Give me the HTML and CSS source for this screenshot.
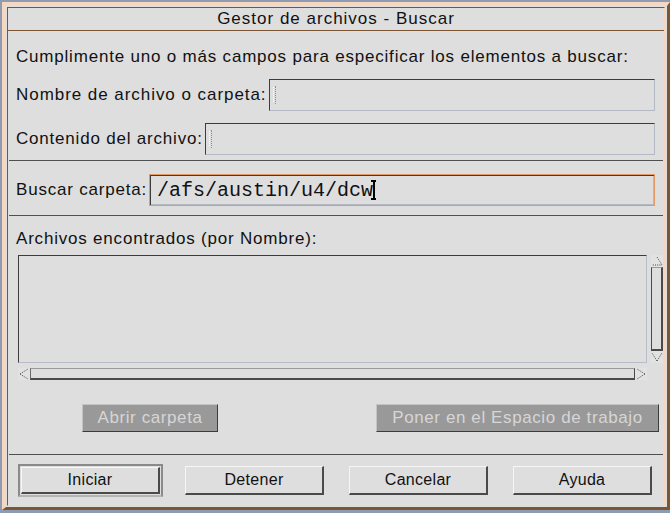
FILE: index.html
```html
<!DOCTYPE html>
<html lang="es">
<head>
<meta charset="utf-8">
<title>Gestor de archivos - Buscar</title>
<link rel="stylesheet" href="styles.css">
</head>
<body>
<div class="window">
  <div class="frame">
    <div class="titlebar">Gestor de archivos - Buscar</div>
    <div class="content">
      <div class="intro">Cumplimente uno o más campos para especificar los elementos a buscar:</div>
      <div class="row row-name">
        <span class="label label-name">Nombre de archivo o carpeta:</span>
        <div class="field"><span class="caret-off"></span></div>
      </div>
      <div class="row row-content">
        <span class="label">Contenido del archivo:</span>
        <div class="field"><span class="caret-off"></span></div>
      </div>
      <div class="sep sep-1"></div>
      <div class="row row-folder">
        <span class="label">Buscar carpeta:</span>
        <div class="field field-focus"><span class="mono">/afs/austin/u4/dcw</span><span class="caret-on"></span></div>
      </div>
      <div class="sep sep-2"></div>
      <div class="found-label">Archivos encontrados (por Nombre):</div>
      <div class="list-area">
        <div class="list-col">
          <div class="listbox"></div>
          <div class="hscroll">
            <div class="arrow">
              <svg width="12" height="12" viewBox="0 0 12 12"><path d="M2 6 L10 11 M2 6 L10 1" stroke="#444" stroke-width="1" stroke-dasharray="1 1.2" fill="none"/></svg>
            </div>
            <div class="hthumb"></div>
            <div class="arrow">
              <svg width="12" height="12" viewBox="0 0 12 12"><path d="M10 6 L2 11 M10 6 L2 1" stroke="#444" stroke-width="1" stroke-dasharray="1 1.2" fill="none"/></svg>
            </div>
          </div>
        </div>
        <div class="vscroll">
          <div class="arrow">
            <svg width="12" height="12" viewBox="0 0 12 12"><path d="M6 2 L11 10 L1 10" stroke="#444" stroke-width="1" stroke-dasharray="1 1.2" fill="none"/></svg>
          </div>
          <div class="vthumb"></div>
          <div class="arrow">
            <svg width="12" height="12" viewBox="0 0 12 12"><path d="M6 10 L11 2 M6 10 L1 2" stroke="#444" stroke-width="1" stroke-dasharray="1 1.2" fill="none"/></svg>
          </div>
        </div>
      </div>
      <div class="actions">
        <div class="btn btn-disabled btn-open">Abrir carpeta</div>
        <div class="btn btn-disabled btn-put">Poner en el Espacio de trabajo</div>
      </div>
      <div class="sep sep-3"></div>
      <div class="footer">
        <div class="default-ring"><div class="btn btn-main">Iniciar</div></div>
        <div class="btn btn-main btn-gap-a">Detener</div>
        <div class="btn btn-main btn-gap-b">Cancelar</div>
        <div class="btn btn-main btn-gap-b">Ayuda</div>
      </div>
    </div>
  </div>
</div>
</body>
</html>
```

FILE: styles.css
```css
* { box-sizing: border-box; }
html, body {
  margin: 0;
  padding: 0;
  width: 670px;
  height: 513px;
  overflow: hidden;
  background: #8d9cb2;
  font-family: "Liberation Sans", Arial, sans-serif;
  color: #000;
}
.window {
  margin: 2px 0 0 2px;
  width: 668px;
  height: 508px;
  border-style: solid;
  border-width: 4px 3px 3px 4px;
  border-color: #f6d6be #7a5634 #7a5634 #f6d6be;
  background: #dedede;
  padding: 1px 2px 1px 1px;
}
.frame {
  height: 100%;
  border: 1px solid;
  border-color: #7a5634 #f6d6be #f6d6be #7a5634;
  display: flex;
  flex-direction: column;
}
.titlebar {
  height: 23px;
  border-bottom: 1px solid #7a5634;
  text-align: center;
  font-size: 17px;
  line-height: 22px;
  letter-spacing: 1px;
  color: #111;
}
.content {
  flex: 1;
  display: flex;
  flex-direction: column;
  font-size: 17px;
  letter-spacing: 0.8px;
  color: #111;
}
.intro {
  height: 24px;
  line-height: 24px;
  margin: 14px 0 0 8px;
}
.row {
  display: flex;
  align-items: center;
  padding: 0 9px 0 8px;
  height: 32px;
}
.row-name { margin-top: 10px; }
.row-content { margin-top: 12px; }
.label { white-space: nowrap; margin-right: 2px; }
.label-name { letter-spacing: 0.95px; }
.field {
  flex: 1;
  height: 32px;
  border: 1px solid;
  border-color: #3c3c3c #b4b8c4 #b4b8c4 #3c3c3c;
  background: #dedede;
  display: flex;
  align-items: center;
  padding-left: 3px;
}
.caret-off {
  width: 3px;
  height: 18px;
  border-left: 1px dotted #fff;
  border-right: 1px dotted #888;
  border-top: 1px dotted #777;
  border-bottom: 1px dotted #777;
}
.sep {
  height: 1px;
  background: #505050;
  margin: 0 1px;
}
.sep-1 { margin-top: 5px; }
.row-folder { margin-top: 13px; }
.field-focus {
  border: 1px solid #e59a66;
  box-shadow: inset 1px 1px 0 #3c3c3c, inset -1px -1px 0 #b4b8c4;
  padding-left: 7px;
}
.mono {
  font-family: "Liberation Mono", "Courier New", monospace;
  font-size: 20px;
  letter-spacing: 0;
}
.caret-on {
  width: 5px;
  height: 20px;
  margin-left: -2px;
  background:
    linear-gradient(#000, #000) center / 2px 100% no-repeat,
    linear-gradient(#000, #000) top / 100% 2px no-repeat,
    linear-gradient(#000, #000) bottom / 100% 2px no-repeat;
}
.sep-2 { margin-top: 9px; }
.found-label {
  height: 24px;
  line-height: 24px;
  margin: 11px 0 0 8px;
}
.list-area {
  display: flex;
  margin-top: 4px;
  padding-left: 10px;
}
.list-col {
  width: 629px;
  display: flex;
  flex-direction: column;
}
.listbox {
  height: 108px;
  border: 1px solid;
  border-color: #3c3c3c #b8bcc8 #b8bcc8 #3c3c3c;
}
.hscroll {
  margin-top: 5px;
  height: 12px;
  display: flex;
}
.arrow {
  width: 12px;
  height: 12px;
  background: #e2e2e2;
  display: flex;
}
.hthumb {
  flex: 1;
  border: 1px solid #4a4a4a;
  border-top-color: #9a9a9a;
  border-left-color: #6a6a6a;
  border-bottom-width: 2px;
}
.vscroll {
  margin-left: 4px;
  width: 12px;
  height: 108px;
  display: flex;
  flex-direction: column;
}
.vthumb {
  flex: 1;
  border: 1px solid #4a4a4a;
  border-top-color: #9a9a9a;
  border-right-width: 2px;
  border-bottom-width: 2px;
}
.actions {
  display: flex;
  justify-content: space-between;
  padding: 0 5px 0 74px;
  margin-top: 24px;
}
.btn {
  display: flex;
  align-items: center;
  justify-content: center;
  white-space: nowrap;
}
.btn-disabled {
  height: 28px;
  background: #999999;
  color: #d6d6d6;
  border: 1px solid;
  border-color: #c4c4c4 #3c3c3c #3c3c3c #c4c4c4;
  letter-spacing: 0.6px;
}
.btn-open { width: 136px; }
.btn-put { width: 283px; }
.sep-3 { margin-top: 22px; }
.footer {
  display: flex;
  align-items: center;
  padding: 0 0 0 10px;
  margin-top: 9px;
}
.default-ring {
  width: 145px;
  height: 33px;
  border: 2px solid;
  border-color: #8a8a8a #8a8a8a #b4b4b4 #8a8a8a;
  padding: 1px;
  display: flex;
}
.default-ring .btn-main { width: 100%; height: 100%; }
.btn-main {
  width: 139px;
  height: 29px;
  border: 1px solid;
  border-width: 1px 2px 2px 1px;
  border-color: #f6f6f6 #4a4a4a #4a4a4a #f6f6f6;
  background: #dedede;
  font-size: 16px;
  letter-spacing: 0.3px;
}
.btn-gap-a { margin-left: 22px; }
.btn-gap-b { margin-left: 25px; }
```
